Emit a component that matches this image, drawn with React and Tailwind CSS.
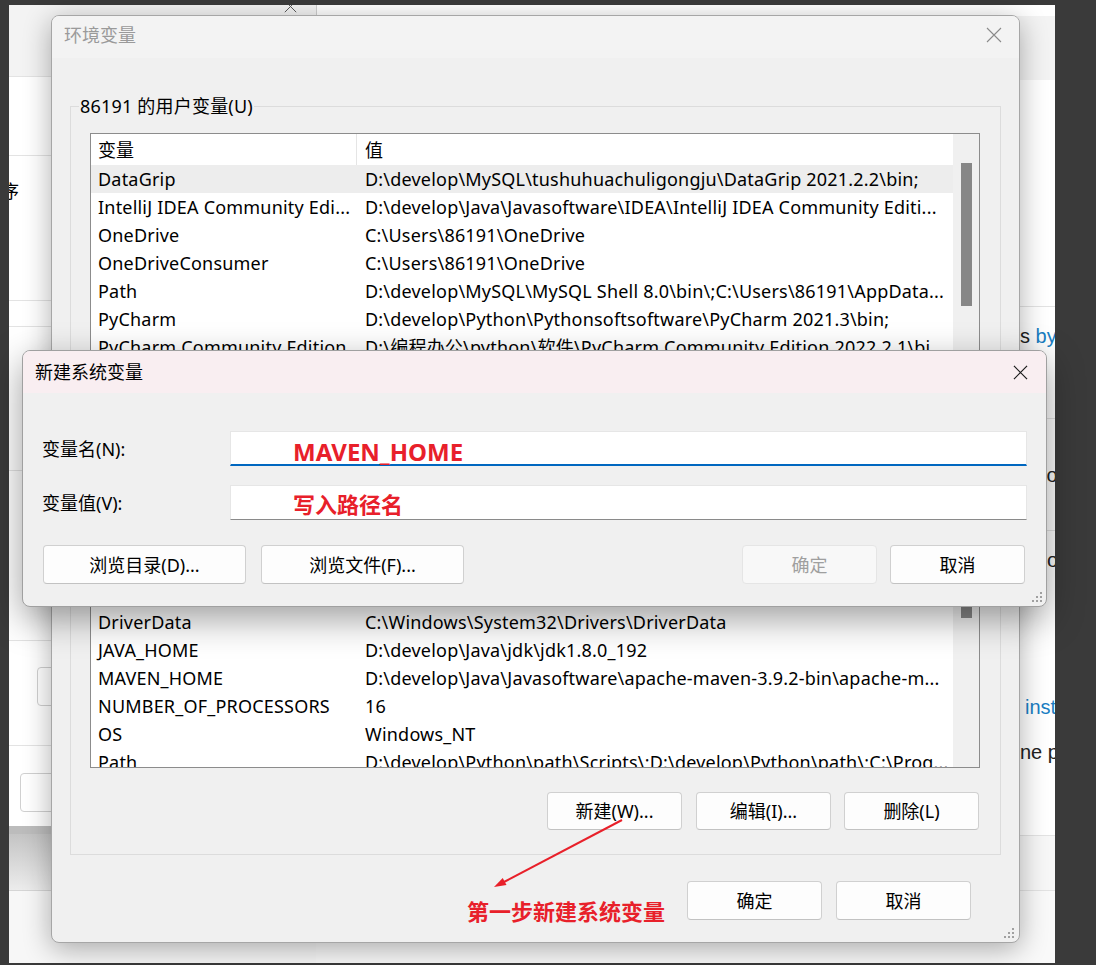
import React from "react";

const userRows = [
  ["DataGrip", "D:\\develop\\MySQL\\tushuhuachuligongju\\DataGrip 2021.2.2\\bin;", true],
  ["IntelliJ IDEA Community Edi...", "D:\\develop\\Java\\Javasoftware\\IDEA\\IntelliJ IDEA Community Editi..."],
  ["OneDrive", "C:\\Users\\86191\\OneDrive"],
  ["OneDriveConsumer", "C:\\Users\\86191\\OneDrive"],
  ["Path", "D:\\develop\\MySQL\\MySQL Shell 8.0\\bin\\;C:\\Users\\86191\\AppData..."],
  ["PyCharm", "D:\\develop\\Python\\Pythonsoftsoftware\\PyCharm 2021.3\\bin;"],
  ["PyCharm Community Edition", "D:\\编程办公\\python\\软件\\PyCharm Community Edition 2022.2.1\\bi..."],
  ["TEMP", "C:\\Users\\86191\\AppData\\Local\\Temp"],
  ["TMP", "C:\\Users\\86191\\AppData\\Local\\Temp"],
];

const sysRows = [
  ["CLASSPATH", ".;%JAVA_HOME%\\lib\\dt.jar;%JAVA_HOME%\\lib\\tools.jar;"],
  ["ComSpec", "C:\\Windows\\system32\\cmd.exe"],
  ["DriverData", "C:\\Windows\\System32\\Drivers\\DriverData"],
  ["JAVA_HOME", "D:\\develop\\Java\\jdk\\jdk1.8.0_192"],
  ["MAVEN_HOME", "D:\\develop\\Java\\Javasoftware\\apache-maven-3.9.2-bin\\apache-m..."],
  ["NUMBER_OF_PROCESSORS", "16"],
  ["OS", "Windows_NT"],
  ["Path", "D:\\develop\\Python\\path\\Scripts\\;D:\\develop\\Python\\path\\;C:\\Prog..."],
];

function CloseX({ color, size, sw }) {
  return (
    <svg width={size} height={size} viewBox="0 0 16 16" className="shrink-0">
      <path d="M1 1L15 15M15 1L1 15" stroke={color} strokeWidth={sw} fill="none" />
    </svg>
  );
}

function Grip() {
  return (
    <svg width="12" height="12" viewBox="0 0 12 12">
      {[[9, 1], [5, 5], [9, 5], [1, 9], [5, 9], [9, 9]].map(([x, y], i) => (
        <rect key={i} x={x} y={y} width="2" height="2" fill="#a0a0a0" />
      ))}
    </svg>
  );
}

function Btn({ children, className }) {
  return (
    <div
      className={
        "flex items-center justify-center rounded-[4px] border border-[#d0d0d0] border-b-[#c2c2c2] bg-[#fdfdfd] text-[18px] leading-none text-black " +
        className
      }
    >
      {children}
    </div>
  );
}

function VarList({ rows, thumbTop, thumbH }) {
  return (
    <div className="flex h-[248px] w-full min-w-0 overflow-hidden border border-[#8c8c8c] bg-white">
      <div className="flex min-w-0 flex-1 flex-col">
        <div className="flex h-[31px] shrink-0 items-center">
          <div className="flex h-full w-[266px] shrink-0 items-center border-r border-[#e5e5e5] pl-[7px]">变量</div>
          <div className="pl-[8px]">值</div>
        </div>
        {rows.map(([n, v, sel], i) => (
          <div key={i} className={"flex h-[28px] shrink-0 items-center tracking-[0.2px] " + (sel ? "bg-[#ededed]" : "")}>
            <div className="w-[266px] shrink-0 overflow-hidden whitespace-nowrap pl-[7px]">{n}</div>
            <div className="w-0 min-w-0 flex-1 overflow-hidden whitespace-nowrap pl-[8px]">{v}</div>
          </div>
        ))}
      </div>
      <div className="w-[26px] shrink-0 bg-[#f0f0f0] pl-[8px]">
        <div className="w-[11px] bg-[#878787]" style={{ marginTop: thumbTop, height: thumbH }} />
      </div>
    </div>
  );
}

export default function App() {
  return (
    <div className="relative h-[965px] w-[1096px] overflow-hidden bg-[#3a3a3a] font-['Noto_Sans','Noto_Sans_CJK_SC',sans-serif] text-[18px] leading-[28px] text-black">
      {/* background window */}
      <div className="absolute left-[9px] top-[5px] flex h-[958px] w-[1046px] overflow-hidden bg-[#fbfbfb] font-['Liberation_Sans','Noto_Sans_CJK_SC',sans-serif] text-[20px] leading-[24px] text-[#222]">
        <div className="flex w-[307px] shrink-0 flex-col">
          <div className="flex h-[72px] shrink-0 justify-end border-b border-[#e3e3e3] bg-[#f3f3f3] pr-[19px]">
            <div className="-mt-[5px]">
              <CloseX color="#555" size={13} sw={1.2} />
            </div>
          </div>
          <div className="h-[79px] shrink-0 border-b border-[#e3e3e3] bg-white" />
          <div className="h-[145px] shrink-0 overflow-hidden border-b border-[#e3e3e3] bg-white pt-[22px]">
            <div className="-ml-[8px] font-['Noto_Sans_CJK_SC',sans-serif] text-[18px] leading-[24px] text-black">序</div>
          </div>
          <div className="h-[26px] shrink-0 border-b border-[#e3e3e3] bg-white" />
          <div className="h-[144px] shrink-0 border-b border-[#e3e3e3] bg-white" />
          <div className="h-[170px] shrink-0 border-b border-[#e3e3e3] bg-white" />
          <div className="h-[105px] shrink-0 border-b border-[#e3e3e3] bg-white pl-[28px] pt-[26px]">
            <div className="h-[39px] w-[150px] rounded-[4px] border border-[#d0d0d0] bg-white" />
          </div>
          <div className="h-[80px] shrink-0 bg-white pl-[11px] pt-[27px]">
            <div className="h-[39px] w-[150px] rounded-[4px] border border-[#d0d0d0] bg-white" />
          </div>
          <div className="h-[65px] shrink-0 border-b border-t-[8px] border-b-[#d5d5d5] border-t-[#bcbcbc] bg-gradient-to-b from-[#c4c4c4] to-[#ececec]" />
          <div className="flex-1 bg-[#f7f7f7]" />
        </div>
        <div className="flex min-w-0 flex-1 flex-col">
          <div className="h-[11px] shrink-0 border-l border-[#cfcfcf] bg-white" />
          <div className="h-[64px] shrink-0 bg-[#f3f3f3]" />
          <div className="h-[227px] shrink-0 border-b border-[#e3e3e3] bg-white" />
          <div className="h-[112px] shrink-0 overflow-hidden whitespace-nowrap border-b border-[#e3e3e3] bg-white pl-[704px] pt-[17px]">
            s <span className="text-[#1a7fc4]">by Microsoft</span>
          </div>
          <div className="h-[112px] shrink-0 overflow-hidden whitespace-nowrap border-b border-[#e3e3e3] bg-white pl-[725px] pt-[44px]">
            to
          </div>
          <div className="flex h-[305px] shrink-0 flex-col overflow-hidden whitespace-nowrap border-b border-[#e3e3e3] bg-white">
            <div className="mt-[17px] pl-[731px]">ow</div>
            <div className="mt-[123px] pl-[709px] text-[#1a7fc4]">install</div>
            <div className="mt-[21px] pl-[704px]">ne page</div>
          </div>
          <div className="h-[55px] shrink-0 border-b border-[#e3e3e3] bg-[#f7f7f7]" />
          <div className="flex-1 bg-[#f9f9f9]" />
        </div>
      </div>

      {/* 环境变量 dialog */}
      <div className="absolute left-[51px] top-[15px] flex h-[928px] w-[969px] flex-col overflow-hidden rounded-[8px] border border-[#a6a6a6] bg-[#f0f0f0] shadow-[0_6px_28px_rgba(0,0,0,0.32)]">
        <div className="flex h-[42px] shrink-0 items-center justify-between bg-[#f3f3f3] pb-[4px] pl-[12px] pr-[17px]">
          <span className="leading-[24px] text-[#9a9a9a]">环境变量</span>
          <CloseX color="#8a8a8a" size={16} sw={1.1} />
        </div>
        <div className="flex min-w-0 flex-1 flex-col px-[18px] pt-[36px]">
          <fieldset className="min-w-0 border border-[#dcdcdc]">
            <legend className="ml-[8px] px-[1px] leading-[24px] tracking-[0.2px]">86191 的用户变量(U)</legend>
            <div className="pb-[24px] pl-[19px] pr-[20px] pt-[15px]">
              <VarList rows={userRows} thumbTop={29} thumbH={143} />
              <div className="mt-[24px] flex justify-end gap-[13px] pr-[1px]">
                <Btn className="h-[38px] w-[135px]">新建(N)...</Btn>
                <Btn className="h-[38px] w-[135px]">编辑(E)...</Btn>
                <Btn className="h-[38px] w-[135px]">删除(D)</Btn>
              </div>
            </div>
          </fieldset>
          <fieldset className="mt-[13px] min-w-0 border border-[#dcdcdc]">
            <legend className="ml-[8px] px-[1px] leading-[24px]">系统变量(S)</legend>
            <div className="pb-[24px] pl-[19px] pr-[20px] pt-[15px]">
              <VarList rows={sysRows} thumbTop={35} thumbH={62} />
              <div className="mt-[24px] flex justify-end pr-[1px]">
                <Btn className="mr-[14px] h-[38px] w-[135px]">新建(W)...</Btn>
                <Btn className="mr-[13px] h-[38px] w-[135px]">编辑(I)...</Btn>
                <Btn className="h-[38px] w-[135px]">删除(L)</Btn>
              </div>
            </div>
          </fieldset>
          <div className="mt-[26px] flex justify-end gap-[14px] pr-[30px]">
            <Btn className="h-[39px] w-[135px]">确定</Btn>
            <Btn className="h-[39px] w-[135px]">取消</Btn>
          </div>
        </div>
        <div className="absolute bottom-[3px] right-[4px]">
          <Grip />
        </div>
      </div>

      {/* 新建系统变量 dialog */}
      <div className="absolute left-[22px] top-[350px] flex h-[257px] w-[1025px] flex-col overflow-hidden rounded-[8px] border border-[#a0a0a0] bg-[#f0f0f0] shadow-[0_12px_36px_rgba(0,0,0,0.38)]">
        <div className="flex h-[42px] shrink-0 items-center justify-between bg-[#f9eef1] pl-[12px] pr-[18px]">
          <span className="leading-[24px]">新建系统变量</span>
          <CloseX color="#1a1a1a" size={15} sw={1.3} />
        </div>
        <div className="flex flex-1 flex-col px-[19px] pt-[38px]">
          <div className="flex h-[35px] items-center">
            <div className="w-[188px] shrink-0">变量名(N):</div>
            <div className="flex h-full flex-1 items-center border border-b-2 border-[#e6e6e6] border-b-[#0067c0] bg-white pl-[62px] pt-[8px]">
              <span className="text-[24px] font-bold leading-[28px] text-[#e8202a]">MAVEN_HOME</span>
            </div>
          </div>
          <div className="mt-[19px] flex h-[35px] items-center">
            <div className="w-[188px] shrink-0">变量值(V):</div>
            <div className="flex h-full flex-1 items-center border border-[#e6e6e6] border-b-[#8a8a8a] bg-white pl-[62px]">
              <span className="font-['Noto_Sans_CJK_SC',sans-serif] text-[22px] font-bold leading-[28px] text-[#e8202a]">写入路径名</span>
            </div>
          </div>
          <div className="mt-[25px] flex items-center pl-[1px] pr-[2px]">
            <Btn className="h-[39px] w-[203px]">浏览目录(D)...</Btn>
            <Btn className="ml-[15px] h-[39px] w-[203px]">浏览文件(F)...</Btn>
            <div className="flex-1" />
            <div className="flex h-[39px] w-[135px] items-center justify-center rounded-[4px] border border-[#e5e5e5] bg-[#f8f8f8] leading-none text-[#9f9f9f]">确定</div>
            <Btn className="ml-[13px] h-[39px] w-[135px]">取消</Btn>
          </div>
        </div>
        <div className="absolute bottom-[3px] right-[3px]">
          <Grip />
        </div>
      </div>

      {/* annotations */}
      <svg className="pointer-events-none absolute left-0 top-0" width="1096" height="965">
        <line x1="622" y1="820" x2="502" y2="883" stroke="#e8202a" strokeWidth="2" />
        <polygon points="494,887 506.5,884.9 502.7,877.9" fill="#e8202a" />
      </svg>
      <div className="absolute left-[467px] top-[896px] font-['Noto_Sans_CJK_SC',sans-serif] text-[22px] font-bold leading-[28px] text-[#e8202a]">
        第一步新建系统变量
      </div>
    </div>
  );
}
